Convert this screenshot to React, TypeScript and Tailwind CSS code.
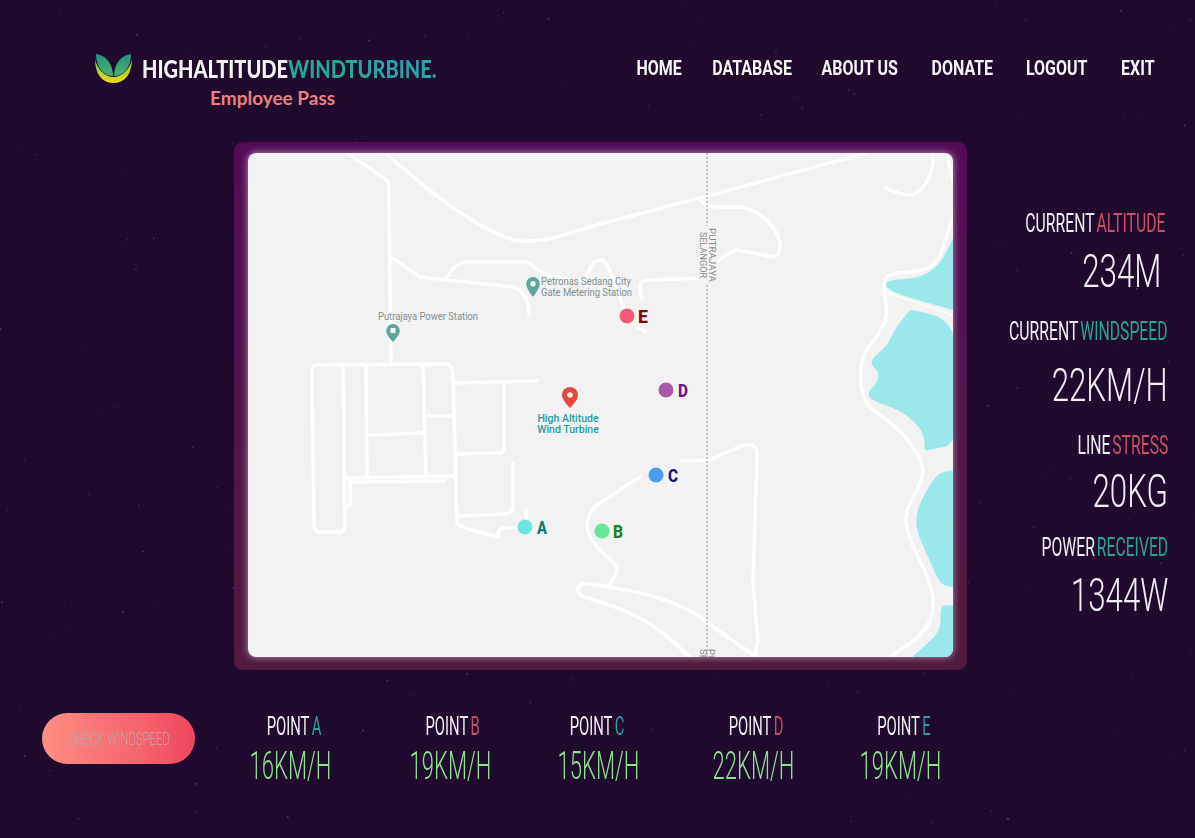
import {useMemo} from "react"

const font = "font-['Roboto',sans-serif]"

// rounds the corners of a point list, closes the shape when asked
function smooth(points: number[][], closed = false) {
  const mid = (a: number[], b: number[]) => [(a[0] + b[0]) / 2, (a[1] + b[1]) / 2]
  if (closed) {
    const start = mid(points[points.length - 1], points[0])
    let d = `M${start[0]} ${start[1]}`
    points.forEach((p, i) => {
      const m = mid(p, points[(i + 1) % points.length])
      d += `Q${p[0]} ${p[1]} ${m[0]} ${m[1]}`
    })
    return d + "Z"
  }
  let d = `M${points[0][0]} ${points[0][1]}`
  for (let i = 1; i < points.length - 1; i++) {
    const m = mid(points[i], points[i + 1])
    d += `Q${points[i][0]} ${points[i][1]} ${m[0]} ${m[1]}`
  }
  const last = points[points.length - 1]
  return d + `L${last[0]} ${last[1]}`
}

const roads = [
  "M99 0L139 27Q141 30 141 44L143 210",
  "M137 0C182 39 222 72 265 87C295 92 320 80 352 71L452 45L619 0",
  "M143 104L172 124L265 134Q281 140 281 162",
  "M199 124Q208 109 218 109L279 109L295 120Q320 128 335 128Q340 122 342 115Q345 107 355 107Q362 113 372 145Q380 172 398 179",
  "M394 145Q388 128 398 127L459 125Q466 105 489 97L525 104Q536 100 530 83Q520 62 495 54L465 54Q455 52 452 46",
  "M685 0Q686 30 665 42Q652 42 637 35",
  "M699 2L705 29",
  smooth([[705, 62], [698, 88], [689, 110], [672, 119], [640, 120], [635, 132], [640, 162], [632, 180], [614, 202], [612, 230], [617, 250], [629, 260], [652, 277], [668, 298], [677, 317], [668, 340], [655, 364], [665, 395], [682, 427], [687, 460], [672, 484], [642, 504]]),
  "M69 212L199 211Q204 212 205 222L209 370Q212 375 250 384Q250 375 256 375L272 374",
  "M69 212Q64 212 64 218L66 372Q66 379 72 379L92 379Q97 379 97 372L95 212",
  "M118 212L119 322M175 212L178 322M119 282L175 280M179 263L205 263",
  "M207 230L289 228M256 229L256 296Q256 300 250 300L209 301M99 325L205 323",
  "M197 328L102 329L102 352L99 354",
  "M265 310L265 353Q265 361 255 361L209 363M278 357L278 374",
  "M349 352Q339 362 339 372Q340 385 352 397L368 412Q372 420 359 434",
  "M349 352L392 324M434 308L462 307L495 292Q509 290 509 300L505 430L510 487L507 504",
  smooth([[335, 430], [326, 437], [335, 444], [372, 455], [409, 474], [442, 504]]),
  smooth([[335, 430], [385, 437], [439, 454], [469, 477], [509, 504]])
]

const water = [
  smooth([[642, 127], [672, 125], [692, 112], [705, 85], [712, 70], [712, 159], [705, 157], [652, 142], [640, 136], [637, 131]], true),
  smooth([[660, 159], [664, 156], [712, 170], [712, 291], [680, 297], [676, 298], [677, 285], [670, 272], [652, 257], [622, 247], [620, 239], [629, 230], [631, 219], [620, 209], [640, 192], [645, 179]], true),
  smooth([[712, 317], [694, 318], [682, 330], [664, 367], [680, 404], [689, 424], [695, 433], [712, 435]], true),
  smooth([[712, 455], [697, 451], [692, 456], [693, 478], [672, 497], [660, 508], [712, 508]], true)
]

const dots = [
  {label: "E", cx: 379, cy: 163, x: 390, fill: "#f45a78", text: "#7d0d14"},
  {label: "D", cx: 418, cy: 237, x: 430, fill: "#a85aa5", text: "#7b0e8a"},
  {label: "C", cx: 408, cy: 322, x: 420, fill: "#4a9df2", text: "#14107a"},
  {label: "A", cx: 277, cy: 374, x: 289, fill: "#6fe6dc", text: "#0f7a76"},
  {label: "B", cx: 354, cy: 378, x: 365, fill: "#66e59b", text: "#14851f"}
]

const stats = [
  {white: "CURRENT", colored: "ALTITUDE", value: "234M", tone: "text-[#c9505f]", labelClass: "mt-[72px] mr-[3px]", valueClass: "mt-[20px] mr-[7px]"},
  {white: "CURRENT", colored: "WINDSPEED", value: "22KM/H", tone: "text-[#2aa393]", labelClass: "mt-[34px]", valueClass: "mt-[26px]"},
  {white: "LINE", colored: "STRESS", value: "20KG", tone: "text-[#c9505f]", labelClass: "mt-[34px]", valueClass: "mt-[18px]"},
  {white: "POWER", colored: "RECEIVED", value: "1344W", tone: "text-[#2aa393]", labelClass: "mt-[30px]", valueClass: "mt-[20px]"}
]

const points = [
  {letter: "A", value: "16KM/H", tone: "text-[#2aa393]", gap: "ml-[46px]", shift: "ml-[6px]"},
  {letter: "B", value: "19KM/H", tone: "text-[#c9505f]", gap: "ml-[60px]", shift: "ml-[4px]"},
  {letter: "C", value: "15KM/H", tone: "text-[#2f97a5]", gap: "ml-[48px]", shift: "-ml-[4px]"},
  {letter: "D", value: "22KM/H", tone: "text-[#c9505f]", gap: "ml-[55px]", shift: "ml-[4px]"},
  {letter: "E", value: "19KM/H", tone: "text-[#2f97a5]", gap: "ml-[47px]", shift: "ml-[6px]"}
]

const navItems = [
  {label: "HOME", gap: ""},
  {label: "DATABASE", gap: "ml-[38px]"},
  {label: "ABOUT US", gap: "ml-[37px]"},
  {label: "DONATE", gap: "ml-[42px]"},
  {label: "LOGOUT", gap: "ml-[41px]"},
  {label: "EXIT", gap: "ml-[42px]"}
]

function Stars() {
  const stars = useMemo(() => {
    let seed = 41
    const rand = () => {
      seed = (seed * 16807) % 2147483647
      return seed / 2147483647
    }
    return Array.from({length: 260}, () => ({
      x: rand() * 1195,
      y: rand() * 838,
      r: 0.4 + rand() * 0.8,
      o: 0.15 + rand() * 0.5
    }))
  }, [])

  return (
    <svg className="absolute inset-0 w-full h-full" viewBox="0 0 1195 838">
      {stars.map((s, i) => (
        <circle key={i} cx={s.x} cy={s.y} r={s.r} fill="#6a4fd0" opacity={s.o}/>
      ))}
    </svg>
  )
}

function Logo() {
  return (
    <svg width="37" height="31" viewBox="0 0 37 31" className="shrink-0">
      <defs>
        <linearGradient id="leaf" x1="0" y1="0" x2="0" y2="1">
          <stop offset="0" stopColor="#24927f"/>
          <stop offset="1" stopColor="#4fb26a"/>
        </linearGradient>
        <linearGradient id="cup" x1="0" y1="0" x2="0" y2="1">
          <stop offset="0" stopColor="#7cc24a"/>
          <stop offset="1" stopColor="#e8dc1a"/>
        </linearGradient>
      </defs>
      <path d="M0 6C0 22 8 30 18.500 30C29 30 37 22 37 6C35 16 27 24 18.500 24C10 24 2 16 0 6Z" fill="url(#cup)"/>
      <path d="M1 1C10 2 17.500 9 18 23C9 23 1 15 1 1Z" fill="url(#leaf)"/>
      <path d="M36 1C27 2 19.500 9 19 23C28 23 36 15 36 1Z" fill="url(#leaf)"/>
    </svg>
  )
}

function MapView() {
  return (
    <svg className="w-[705px] h-[504px] block" viewBox="0 0 705 504">
      <rect width="705" height="504" fill="#f2f2f2"/>
      {water.map((d, i) => <path key={i} d={d} fill="#9be8eb"/>)}
      <path d="M637 139L705 162" stroke="#fbfbfb" strokeWidth="2" fill="none"/>
      {roads.map((d, i) => (
        <path key={i} d={d} stroke="#fff" strokeWidth="3.500" fill="none" strokeLinecap="round" strokeLinejoin="round"/>
      ))}
      <path d="M459 0V504" stroke="#a8a8a8" strokeWidth="1.200" strokeDasharray="2 2" fill="none"/>

      <g className="font-['Roboto',sans-serif]" fontSize="10.500" fill="#7f8f90">
        <text x="293" y="132" textLength="90" lengthAdjust="spacingAndGlyphs">Petronas Sedang City</text>
        <text x="293" y="143" textLength="91" lengthAdjust="spacingAndGlyphs">Gate Metering Station</text>
        <text x="130" y="167" textLength="100" lengthAdjust="spacingAndGlyphs">Putrajaya Power Station</text>
        <g fontSize="9.500" fill="#8a8a8a">
          <rect x="450" y="73" width="20" height="58" fill="#f2f2f2"/>
          <text transform="translate(461 75) rotate(90)" textLength="54" lengthAdjust="spacingAndGlyphs">PUTRAJAYA</text>
          <text transform="translate(452 79) rotate(90)" textLength="46" lengthAdjust="spacingAndGlyphs">SELANGOR</text>
          <text transform="translate(460 496) rotate(90)">PU</text>
          <text transform="translate(452 496) rotate(90)">SE</text>
        </g>
        <g fill="#2a9a9c" fontWeight="500" textAnchor="middle">
          <text x="320" y="269">High Altitude</text>
          <text x="320" y="280">Wind Turbine</text>
        </g>
      </g>

      <path d="M285 124a6.800 6.800 0 0 1 6.800 6.800c0 5-6.800 13-6.800 13s-6.800-8-6.800-13a6.800 6.800 0 0 1 6.800-6.800z" fill="#5ea69c"/>
      <circle cx="285" cy="130.800" r="2.700" fill="#f2f2f2"/>
      <path d="M145 171a6.800 6.800 0 0 1 6.800 6.800c0 4.500-6.800 11.200-6.800 11.200s-6.800-6.700-6.800-11.200a6.800 6.800 0 0 1 6.800-6.800z" fill="#5ea69c"/>
      <rect x="142.500" y="175" width="5" height="5" fill="#f2f2f2"/>
      <path d="M322 234a8 8 0 0 1 8 8c0 5.500-8 13-8 13s-8-7.500-8-13a8 8 0 0 1 8-8z" fill="#e5473a"/>
      <circle cx="322" cy="242" r="2.800" fill="#f6e9e6"/>

      {dots.map(d => (
        <g key={d.label}>
          <circle cx={d.cx} cy={d.cy} r="7.500" fill={d.fill}/>
          <text x={d.x} y={d.cy + 7} fill={d.text} fontSize="19" fontWeight="800" textLength="10" lengthAdjust="spacingAndGlyphs" className="font-['Roboto',sans-serif]">{d.label}</text>
        </g>
      ))}
    </svg>
  )
}

export default function App() {
  return (
    <div className={`relative h-[838px] overflow-hidden bg-[#200b2e] ${font}`}>
      <Stars/>

      <div className="relative flex flex-col">
        <header className="flex justify-between items-start h-[142px] pl-[95px] pr-[40px]">
          <div className="flex flex-col">
            <div className="flex items-center gap-[10px] mt-[53px] h-[31px]">
              <Logo/>
              <div className="w-[295px] h-[31px] flex items-center">
                <h1 className="shrink-0 origin-left scale-x-[0.8] font-['Lato',sans-serif] font-black text-[25px] leading-none whitespace-nowrap">
                  <span className="text-[#f4f4f6]">HIGHALTITUDE</span>
                  <span className="bg-linear-to-r from-[#27a98a] to-[#2f9fb2] bg-clip-text text-transparent">WINDTURBINE.</span>
                </h1>
              </div>
            </div>
            <p className="ml-[115px] mt-[2px] font-['Lato',sans-serif] font-bold text-[19px] leading-[24px] text-[#ec7f7f]">Employee Pass</p>
          </div>
          <nav className="flex mt-[56px] origin-right scale-x-[0.8] font-bold text-[20px] leading-[24px] text-[#f6f6f8]">
            {navItems.map(item => <a key={item.label} className={`${item.gap} whitespace-nowrap`}>{item.label}</a>)}
          </nav>
        </header>

        <main className="flex h-[528px]">
          <section className="ml-[234px] w-[733px] h-[528px] shrink-0 rounded-[9px] bg-linear-to-b from-[#520c55] to-[#4f1b3e] pt-[11px] pl-[14px]">
            <div className="w-[705px] h-[504px] rounded-[8px] overflow-hidden shadow-[0_0_6px_1px_rgba(255,255,255,0.45)]">
              <MapView/>
            </div>
          </section>

          <aside className="w-[228px] shrink-0 flex flex-col pr-[27px] text-[#f1eff4]">
            {stats.map(stat => (
              <div key={stat.colored} className="flex flex-col">
                <div className={`${stat.labelClass} flex justify-end`}>
                  <p className="shrink-0 origin-right scale-x-[0.63] text-[25px] leading-[20px] whitespace-nowrap">
                    {stat.white}<span className={`${stat.tone} ml-[3px]`}>{stat.colored}</span>
                  </p>
                </div>
                <div className={`${stat.valueClass} flex justify-end`}>
                  <p className="shrink-0 origin-right scale-x-[0.68] text-[46px] leading-[34px] font-light whitespace-nowrap">{stat.value}</p>
                </div>
              </div>
            ))}
          </aside>
        </main>

        <footer className="flex items-start pl-[42px] pt-[43px]">
          <button className="w-[153px] h-[51px] shrink-0 rounded-full bg-linear-to-r from-[#fd8f84] to-[#ef4560] flex items-center justify-center">
            <span className="shrink-0 scale-x-[0.63] text-[18px] font-light text-[#bfa3a6] whitespace-nowrap">CHECK WINDSPEED</span>
          </button>
          {points.map(point => (
            <div key={point.letter} className={`${point.gap} w-[100px] shrink-0 flex flex-col items-center`}>
              <p className={`${point.shift} mt-[3px] scale-x-[0.57] text-[26px] leading-[20px] text-[#f1eff4] whitespace-nowrap`}>
                POINT<span className={`${point.tone} ml-[4px]`}>{point.letter}</span>
              </p>
              <p className="mt-[16px] scale-x-[0.58] text-[38px] leading-[28px] font-light text-[#8fe08f] whitespace-nowrap">{point.value}</p>
            </div>
          ))}
        </footer>
      </div>
    </div>
  )
}
